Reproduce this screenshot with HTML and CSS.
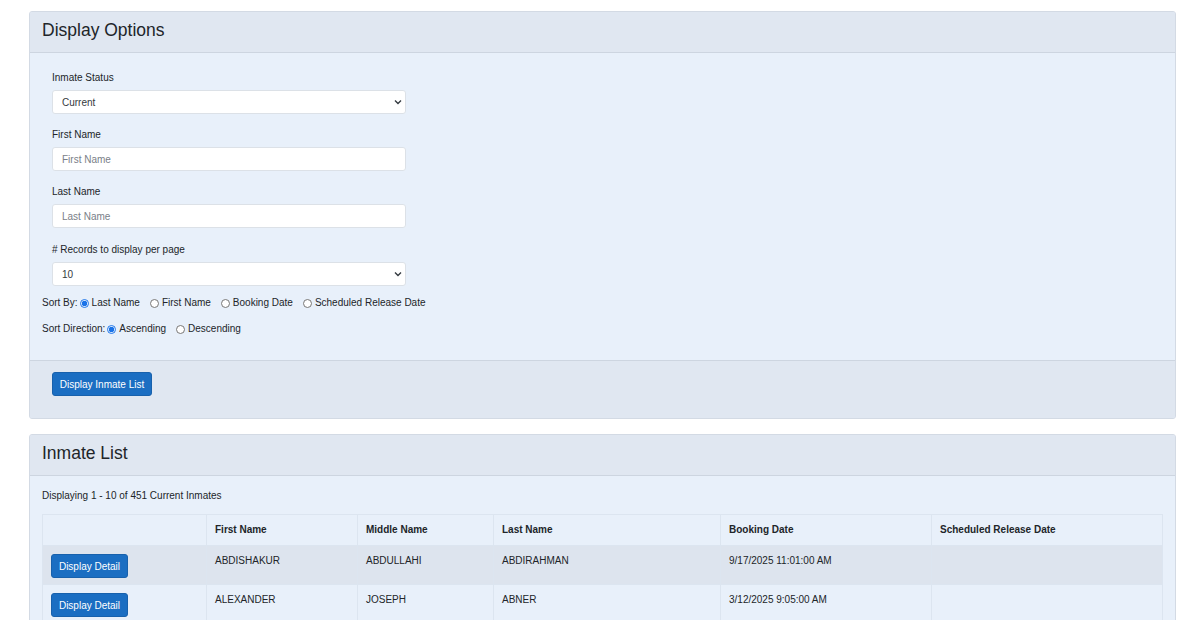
FILE: index.html
```html
<!DOCTYPE html>
<html>
<head>
<meta charset="utf-8">
<link rel="stylesheet" href="styles.css">
</head>
<body>
<div class="page">
  <section class="card">
    <div class="card-header"><h4>Display Options</h4></div>
    <div class="card-body">
      <div class="fields">
        <div class="group">
          <label class="lbl">Inmate Status</label>
          <div class="select-wrap">
            <select class="control"><option>Current</option></select>
            <svg class="chev" width="8" height="6" viewBox="0 0 8 6"><path d="M1 1.5 L4 4.5 L7 1.5" fill="none" stroke="#343a40" stroke-width="1.4"/></svg>
          </div>
        </div>
        <div class="group">
          <label class="lbl">First Name</label>
          <input class="control" type="text" placeholder="First Name">
        </div>
        <div class="group">
          <label class="lbl">Last Name</label>
          <input class="control" type="text" placeholder="Last Name">
        </div>
        <div class="group">
          <label class="lbl"># Records to display per page</label>
          <div class="select-wrap">
            <select class="control"><option>10</option></select>
            <svg class="chev" width="8" height="6" viewBox="0 0 8 6"><path d="M1 1.5 L4 4.5 L7 1.5" fill="none" stroke="#343a40" stroke-width="1.4"/></svg>
          </div>
        </div>
      </div>
      <div class="radio-row">
        <span class="rlabel">Sort By:</span>
        <label class="opt"><input type="radio" name="sort" checked><span>Last Name</span></label>
        <label class="opt"><input type="radio" name="sort"><span>First Name</span></label>
        <label class="opt"><input type="radio" name="sort"><span>Booking Date</span></label>
        <label class="opt"><input type="radio" name="sort"><span>Scheduled Release Date</span></label>
      </div>
      <div class="radio-row second">
        <span class="rlabel">Sort Direction:</span>
        <label class="opt"><input type="radio" name="dir" checked><span>Ascending</span></label>
        <label class="opt"><input type="radio" name="dir"><span>Descending</span></label>
      </div>
    </div>
    <div class="card-footer">
      <button class="btn">Display Inmate List</button>
    </div>
  </section>

  <section class="card list">
    <div class="card-header"><h4>Inmate List</h4></div>
    <div class="card-body list-body">
      <p class="summary">Displaying 1 - 10 of 451 Current Inmates</p>
      <table class="tbl">
        <colgroup>
          <col class="c1"><col class="c2"><col class="c3"><col class="c4"><col class="c5"><col class="c6">
        </colgroup>
        <thead>
          <tr><th></th><th>First Name</th><th>Middle Name</th><th>Last Name</th><th>Booking Date</th><th>Scheduled Release Date</th></tr>
        </thead>
        <tbody>
          <tr class="odd"><td><button class="btn">Display Detail</button></td><td>ABDISHAKUR</td><td>ABDULLAHI</td><td>ABDIRAHMAN</td><td>9/17/2025 11:01:00 AM</td><td></td></tr>
          <tr><td><button class="btn">Display Detail</button></td><td>ALEXANDER</td><td>JOSEPH</td><td>ABNER</td><td>3/12/2025 9:05:00 AM</td><td></td></tr>
        </tbody>
      </table>
    </div>
  </section>
</div>
</body>
</html>
```

FILE: styles.css
```css
html, body {
  margin: 0;
  padding: 0;
  background: #ffffff;
}
body {
  font-family: "Liberation Sans", Arial, sans-serif;
  font-size: 10px;
  color: #212529;
  height: 620px;
  overflow: hidden;
}
.page {
  padding: 11px 24px 0 29px;
  width: 1147px;
}
.card {
  border: 1px solid #d3dae4;
  border-radius: 3px;
  background: #e8f0fa;
  overflow: hidden;
}
.card.list {
  margin-top: 15px;
}
.card-header {
  background: #e0e7f1;
  border-bottom: 1px solid #cdd5e0;
  height: 40px;
  display: flex;
  align-items: center;
  padding: 0 12px;
}
.card-header h4 {
  margin: 0;
  font-size: 17.5px;
  font-weight: 400;
  line-height: 22px;
  padding-bottom: 4px;
}
.card-body {
  padding: 19px 12px 0 12px;
  height: 307px;
  box-sizing: border-box;
}
.fields {
  padding: 0 10px;
  width: 354px;
}
.group {
  display: flex;
  flex-direction: column;
  margin-bottom: 15px;
}
.group:nth-child(3) {
  margin-bottom: 16px;
}
.group:last-child {
  margin-bottom: 9px;
}
.lbl {
  line-height: 12px;
  margin-bottom: 6px;
}
.control {
  box-sizing: border-box;
  width: 354px;
  height: 24px;
  border: 1px solid #dce1e7;
  border-radius: 3px;
  background: #ffffff;
  font-family: "Liberation Sans", Arial, sans-serif;
  font-size: 10px;
  color: #343a40;
  padding: 0 9px;
  outline: none;
  margin: 0;
}
.control::placeholder {
  color: #7a8088;
}
select.control {
  appearance: none;
  -webkit-appearance: none;
}
.select-wrap {
  position: relative;
  height: 24px;
}
.chev {
  position: absolute;
  right: 4px;
  top: 9px;
}
.radio-row {
  display: flex;
  align-items: center;
  line-height: 16px;
  height: 16px;
}
.radio-row.second {
  margin-top: 10px;
}
.rlabel {
  margin-right: 2px;
}
.opt {
  display: flex;
  align-items: center;
  margin-right: 10px;
}
.opt input {
  width: 9px;
  height: 9px;
  margin: 0 3px 0 0;
  accent-color: #1a73e8;
}
.card-footer {
  background: #e0e7f1;
  border-top: 1px solid #cdd5e0;
  padding: 11px 22px 22px;
}
.btn {
  height: 24px;
  padding: 0;
  white-space: nowrap;
  font-family: "Liberation Sans", Arial, sans-serif;
  font-size: 10px;
  color: #ffffff;
  background: #1b6ec2;
  border: 1px solid #1861ac;
  border-radius: 3px;
  cursor: pointer;
}
.card-footer .btn {
  width: 100px;
}
.list-body {
  height: auto;
  padding: 13px 12px 0 12px;
}
.summary {
  margin: 0 0 11px 0;
  line-height: 14px;
}
.tbl {
  table-layout: fixed;
  border-collapse: collapse;
  width: 1120px;
  font-size: 10px;
}
.c1 { width: 164px; }
.c2 { width: 151px; }
.c3 { width: 136px; }
.c4 { width: 227px; }
.c5 { width: 211px; }
.c6 { width: 231px; }
.tbl th, .tbl td {
  border: 1px solid #dce5f0;
  text-align: left;
  vertical-align: top;
  padding: 8px 7px 0 8px;
  line-height: 14px;
}
.tbl th {
  height: 22px;
  font-weight: 700;
  padding-top: 8px;
  background: #e8f0fa;
}
.tbl td {
  height: 30px;
}
.tbl td:first-child {
  padding: 8px 8px 0 8px;
}
.tbl tr.odd td {
  background: #dde4ee;
}
.tbl td .btn {
  width: 77px;
}
```
